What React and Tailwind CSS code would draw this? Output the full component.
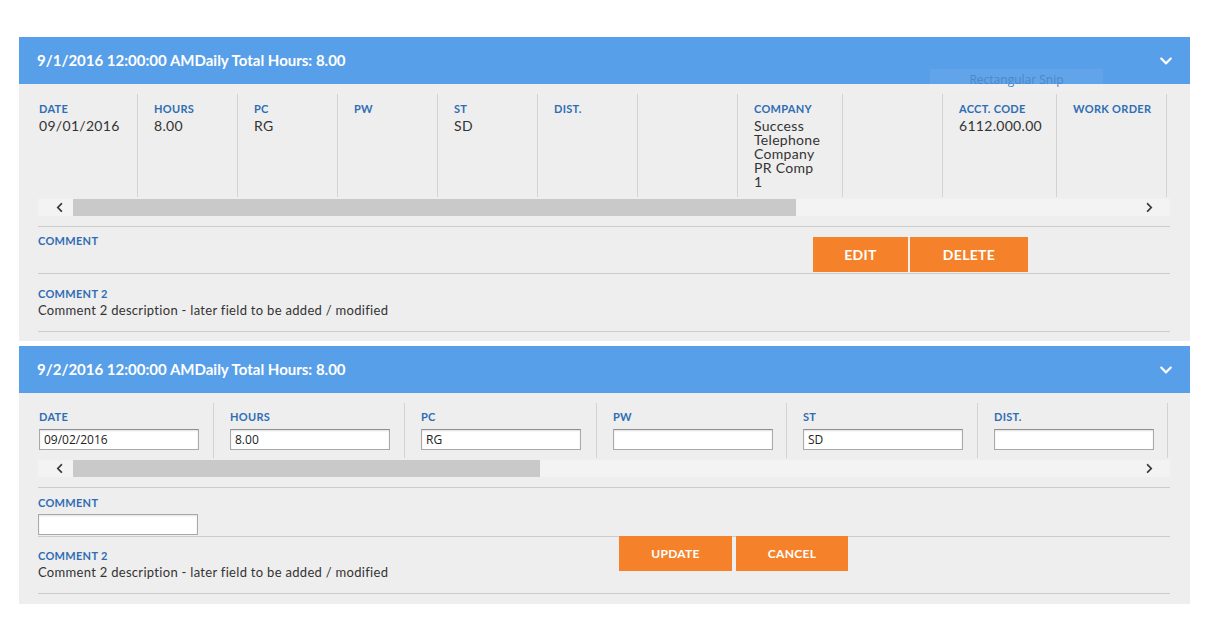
import { FaChevronDown, FaChevronLeft, FaChevronRight } from 'react-icons/fa';

const rowOne = [
  { label: 'Date', value: ['09/01/2016'], w: 'w-[100px]', pad: 'pl-[1px]' },
  { label: 'Hours', value: ['8.00'], w: 'w-[100px]' },
  { label: 'PC', value: ['RG'], w: 'w-[100px]' },
  { label: 'PW', value: [], w: 'w-[100px]' },
  { label: 'ST', value: ['SD'], w: 'w-[100px]' },
  { label: 'Dist.', value: [], w: 'w-[100px]' },
  { label: '', value: [], w: 'w-[100px]' },
  { label: 'Company', value: ['Success', 'Telephone', 'Company', 'PR Comp', '1'], w: 'w-[105px]' },
  { label: '', value: [], w: 'w-[100px]' },
  { label: 'Acct. Code', value: ['6112.000.00'], w: 'w-[114px]' },
  { label: 'Work Order', value: [], w: 'w-[110px]' },
];

const rowTwo = [
  { label: 'Date', value: '09/02/2016', w: 'w-[176px]', pad: 'pl-[1px]' },
  { label: 'Hours', value: '8.00', w: 'w-[191px]' },
  { label: 'PC', value: 'RG', w: 'w-[192px]' },
  { label: 'PW', value: '', w: 'w-[190px]' },
  { label: 'ST', value: 'SD', w: 'w-[191px]' },
  { label: 'Dist.', value: '', w: 'w-[190px]' },
];

function Label({ children }) {
  return (
    <div className="text-[11px] leading-[14px] font-bold uppercase text-[#2f6db3] tracking-[0.3px] h-[14px]">
      {children}
    </div>
  );
}

function Header({ title }) {
  return (
    <div className="h-[47px] bg-[#589fe9] flex items-center justify-between pl-[18px] pr-[17px] text-white">
      <span className="text-[15px] font-bold">{title}</span>
      <FaChevronDown className="w-[14px] h-[14px]" />
    </div>
  );
}

function FakeScroll({ thumb }) {
  return (
    <div className="mt-[2px] h-[17px] bg-[#f3f3f3] flex items-center">
      <div className="w-[35px] flex justify-center pl-[8px]">
        <FaChevronLeft className="w-[11px] h-[11px] text-[#3a3a3a]" />
      </div>
      <div className={`h-[17px] bg-[#c9c9c9] ${thumb}`} />
      <div className="flex-1 flex justify-end pr-[15px]">
        <FaChevronRight className="w-[11px] h-[11px] text-[#3a3a3a]" />
      </div>
    </div>
  );
}

function Field({ value }) {
  return (
    <input
      readOnly
      value={value}
      className="mt-[5px] w-[160px] h-[21px] bg-white border border-[#a9a9a9] border-t-[#8e8e8e] shadow-[inset_0_1px_2px_rgba(0,0,0,0.12)] px-[4px] text-[12px] text-[#222] font-['Open_Sans'] outline-none"
    />
  );
}

function Comment2() {
  return (
    <div>
      <Label>Comment 2</Label>
      <div className="mt-[2px] text-[13px] leading-[14px] text-[#333] tracking-[0.3px]">
        Comment 2 description - later field to be added / modified
      </div>
    </div>
  );
}

function PanelOne() {
  return (
    <div className="relative">
      <Header title="9/1/2016 12:00:00 AMDaily Total Hours: 8.00" />
      <div className="absolute left-[911px] top-[32px] w-[173px] h-[23px] bg-white/[0.06] flex items-center justify-center pb-[2px] text-[12px] text-[#4d87c9] font-['Open_Sans']">
        Rectangular Snip
      </div>
      <div className="bg-[#eeeeee] pl-[19px] pr-[20px] pt-[10px] pb-[9px]">
        <div className="flex h-[103px] overflow-hidden">
          {rowOne.map((c, i) => (
            <div key={i} className={`${c.w} ${c.pad || 'pl-[16px]'} pr-[4px] shrink-0 border-r border-[#d2d2d2] pt-[8px]`}>
              <Label>{c.label}</Label>
              <div className="mt-[3px] text-[14px] leading-[14px] text-[#333] tracking-[0.3px]">
                {c.value.map((line) => (
                  <div key={line}>{line}</div>
                ))}
              </div>
            </div>
          ))}
        </div>
        <FakeScroll thumb="w-[723px]" />
        <div className="mt-[10px] border-t border-b border-[#cccccc] flex">
          <div className="w-[775px] pt-[7px]">
            <Label>Comment</Label>
          </div>
          <div className="pt-[10px] pb-[1px] flex gap-[2px]">
            <button className="w-[95px] h-[35px] bg-[#f5822b] text-white text-[14px] font-bold uppercase tracking-[0.3px]">Edit</button>
            <button className="w-[118px] h-[35px] bg-[#f5822b] text-white text-[14px] font-bold uppercase tracking-[0.3px]">Delete</button>
          </div>
        </div>
        <div className="border-b border-[#cccccc] pt-[13px] pb-[14px]">
          <Comment2 />
        </div>
      </div>
    </div>
  );
}

function PanelTwo() {
  return (
    <div>
      <Header title="9/2/2016 12:00:00 AMDaily Total Hours: 8.00" />
      <div className="bg-[#eeeeee] pl-[19px] pr-[20px] pt-[10px] pb-[10px]">
        <div className="flex h-[55px] overflow-hidden">
          {rowTwo.map((c, i) => (
            <div key={i} className={`${c.w} ${c.pad || 'pl-[16px]'} shrink-0 border-r border-[#d2d2d2] pt-[7px]`}>
              <Label>{c.label}</Label>
              <Field value={c.value} />
            </div>
          ))}
        </div>
        <FakeScroll thumb="w-[467px]" />
        <div className="mt-[10px] border-t border-b border-[#cccccc] pt-[8px] pb-[1px]">
          <Label>Comment</Label>
          <input readOnly className="mt-[4px] block w-[160px] h-[21px] bg-white border border-[#a9a9a9] shadow-[inset_0_1px_2px_rgba(0,0,0,0.12)] outline-none" />
        </div>
        <div className="border-b border-[#cccccc] flex">
          <div className="w-[581px] pt-[12px] pb-[14px]">
            <Comment2 />
          </div>
          <div className="-mt-[1px] flex gap-[4px] items-start">
            <button className="w-[113px] h-[35px] bg-[#f5822b] text-white text-[12px] font-bold uppercase tracking-[0.3px]">Update</button>
            <button className="w-[112px] h-[35px] bg-[#f5822b] text-white text-[12px] font-bold uppercase tracking-[0.3px]">Cancel</button>
          </div>
        </div>
      </div>
    </div>
  );
}

export default function App() {
  return (
    <div className="min-h-screen bg-white pt-[37px] pl-[19px] font-['Lato',sans-serif]">
      <div className="w-[1171px] flex flex-col gap-[5px]">
        <PanelOne />
        <PanelTwo />
      </div>
    </div>
  );
}
